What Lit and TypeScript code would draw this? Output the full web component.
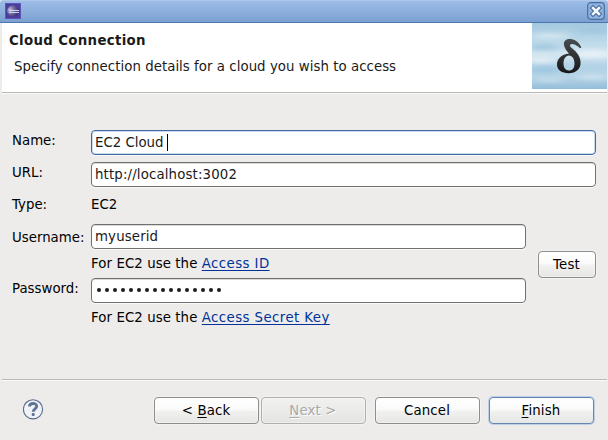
import { LitElement, html, css, svg } from "lit";
import { customElement, property } from "lit/decorators.js";

@customElement("dialog-button")
class DialogButton extends LitElement {
  @property() kind = "";
  @property() mnemonic = "";
  @property() before = "";
  @property() after = "";
  static styles = css`
    :host { display: block; height: 27px; }
    .btn {
      box-sizing: border-box; width: 100%; height: 27px; display: block; padding: 0 1px 0 0;
      border: 1px solid #8e8d8b; border-radius: 4px;
      background: linear-gradient(#fff 0%, #fafafa 48%, #f1f1f0 52%, #e6e6e4 100%);
      box-shadow: 0 0 0 1px rgba(255,255,255,.35), inset 0 0 0 1px rgba(255,255,255,.4);
      font: 13.33px/25px "DejaVu Sans", sans-serif; letter-spacing: .15px; color: #000; text-align: center;
    }
    .disabled { border-color: #b0afad; background: linear-gradient(#f1f1f0, #e4e4e2); color: #aaa9a7; text-shadow: 1px 1px 0 #fff; }
    .primary { border-color: #6487b2; box-shadow: 0 0 0 1px #bdd0e8; }
    .key { text-decoration: underline; text-decoration-thickness: 1px; text-underline-offset: 2px; text-decoration-skip-ink: none; }
  `;
  render() {
    return html`<button class="btn ${this.kind}" ?disabled=${this.kind === "disabled"}>${this.before}<span class="key">${this.mnemonic}</span>${this.after}</button>`;
  }
}

@customElement("app-root")
class AppRoot extends LitElement {
  static styles = css`
    :host {
      display: flex; flex-direction: column; box-sizing: border-box; width: 608px; height: 440px;
      overflow: hidden; background: #edeceb; color: #000;
      font: 13.33px/16px "DejaVu Sans", sans-serif; white-space: pre;
    }
    .titlebar {
      box-sizing: border-box; height: 23px; flex: none; display: flex; align-items: flex-start; justify-content: space-between;
      padding: 0 3px 0 5px; border-bottom: 1px solid #4b76ae; border-top: 1px solid #adc8ea;
      background: linear-gradient(#9dbde7, #7ba0d1);
      border-radius: 3px 3px 0 0;
    }
    .app { width: 16px; height: 16px; margin-top: 2px; }
    .close { width: 18px; height: 18px; margin-top: 1px; }
    .header {
      display: flex; justify-content: space-between; height: 69px; flex: none; margin: 0 1px 0 2px;
      background: #fff; border-bottom: 1px solid #b9b8b5; box-shadow: 0 1px 0 #fafafa;
    }
    .headings { padding: 10px 0 0 7px; color: #1a1a1a; }
    .title { font-weight: bold; letter-spacing: .33px; }
    .desc { padding: 10px 0 0 5px; letter-spacing: .04px; }
    .banner { width: 75px; height: 66px; }
    .form {
      display: grid; margin: 37px 12px 0; flex: none;
      grid-template-columns: 79px 435px 12px 58px;
      grid-template-rows: 25px 7px 25px 37px 25px 29px 25px 29px;
      align-items: center;
    }
    .label { grid-column: 1; padding-bottom: 4px; }
    .field {
      grid-column: 2; box-sizing: border-box; height: 25px; padding: 0 3px; border: 1px solid #71706e; border-radius: 4px;
      background: #fff; color: #1a1a1a; line-height: 23px; display: flex; align-items: center; letter-spacing: .14px;
      box-shadow: 0 1px 0 #f9f9f8, inset 0 1px 0 #d9d9d8;
    }
    .wide { grid-column: 2 / 5; }
    .focused { border-color: #3f6ba3; box-shadow: 0 1px 0 #f9f9f8, inset 0 0 0 1px #cbdcf0; letter-spacing: 0; }
    .caret { width: 1px; height: 17px; margin-left: -1px; background: #000; }
    .dots { display: flex; gap: 3.6px; padding-left: 1.8px; margin-top: -1px; }
    .dot { width: 4.4px; height: 4.4px; border-radius: 50%; background: #1a1a1a; }
    .value, .hint { grid-column: 2; }
    .hint { letter-spacing: .08px; }
    .value { padding-bottom: 2px; }
    .r1 { grid-row: 1; } .r2 { grid-row: 3; } .r3 { grid-row: 4; } .r4 { grid-row: 5; }
    .r5 { grid-row: 6; } .r6 { grid-row: 7; } .r7 { grid-row: 8; }
    .label.r3 { padding-bottom: 2px; }
    .label.r4 { padding: 2px 0 0; }
    .link { color: #003399; letter-spacing: .42px; text-decoration: underline; text-decoration-thickness: 1px; text-underline-offset: 2px; text-decoration-skip-ink: none; }
    .test { grid-column: 4; grid-row: 5 / 8; padding-top: 2px; }
    .footer {
      margin: auto 1px 0 2px; height: 60px; flex: none; display: flex; align-items: flex-start; padding: 0 11px 0 21px;
      border-top: 1px solid #b9b8b5; box-shadow: inset 0 1px 0 #fafafa;
    }
    .help { width: 21px; height: 21px; margin: 19px 110px 0 0; }
    .action { width: 105px; margin: 17px 2px 0 0; }
    .apart { margin-left: 7px; }
    .last { margin: 17px 0 0 7px; }
  `;

  private deltaLogo() {
    return svg`
      <defs>
        <linearGradient id="sky" x1="0" y1="0" x2="0" y2="1">
          <stop offset="0" stop-color="#a4c9df"/><stop offset=".25" stop-color="#b9d7e8"/>
          <stop offset=".48" stop-color="#d3e6f1"/><stop offset=".65" stop-color="#b3d2e6"/>
          <stop offset=".82" stop-color="#b6d4e6"/><stop offset="1" stop-color="#93bedb"/>
        </linearGradient>
        <linearGradient id="ink" x1="0" y1="0" x2="0" y2="1">
          <stop offset="0" stop-color="#4a4d50"/><stop offset="1" stop-color="#161718"/>
        </linearGradient>
        <filter id="soft" x="-50%" y="-200%" width="200%" height="500%" color-interpolation-filters="sRGB"><feGaussianBlur stdDeviation="6 2"/></filter>
      </defs>
      <rect width="75" height="66" fill="url(#sky)"/>
      <g filter="url(#soft)">
        <ellipse cx="18" cy="13" rx="20" ry="3" fill="#d3e6f0"/>
        <ellipse cx="62" cy="7" rx="18" ry="3" fill="#9fc6df"/>
        <ellipse cx="12" cy="24" rx="17" ry="3" fill="#9fc7df"/>
        <ellipse cx="59" cy="31" rx="20" ry="4" fill="#e6f0f6"/>
        <ellipse cx="9" cy="37" rx="17" ry="3" fill="#e2eef5"/>
        <ellipse cx="13" cy="47" rx="15" ry="2.5" fill="#97c2de"/>
        <ellipse cx="61" cy="54" rx="15" ry="2.5" fill="#cfe3ef"/>
        <ellipse cx="17" cy="57" rx="15" ry="2" fill="#c7deec"/>
      </g>
      <path fill="url(#ink)" fill-rule="evenodd" d="M49.300 24.500C47 18.500 42 16 37.500 16C33.500 16 31.500 18.500 32 22C32.500 25 34.500 28 37 30.500C29.500 31.500 25 35.500 25 41.500C25 47 30 50.200 36.500 50.200C44 50.200 48.600 46 48.600 40C48.600 34 45.500 30 41.500 26.500C39.500 24.700 37.500 23.500 38 22C39.500 20 43 21 46.500 23.800C47.500 25 48.500 25.500 49.300 24.500ZM37 32.500C40.500 33 42.500 36 42.500 40.500C42.500 45 40.500 47.500 37 47.500C33.300 47.500 31.500 44.500 31.500 40.500C31.500 36 33.500 33 37 32.500Z"/>`;
  }

  render() {
    return html`
      <div class="titlebar">
        <svg class="app" viewBox="0 0 16 16">
          <defs><radialGradient id="orb" cx=".25" cy=".4" r=".8"><stop offset="0" stop-color="#c5bedd"/><stop offset=".45" stop-color="#74699d"/><stop offset="1" stop-color="#352768"/></radialGradient></defs>
          <rect width="16" height="16" fill="#493fa0"/>
          <rect x=".5" y=".5" width="15" height="15" fill="none" stroke="#6152b8"/>
          <circle cx="8" cy="8" r="5.800" fill="url(#orb)"/>
          <path d="M4 7.500H14M4 9.500H14" stroke="#c9d9ef" stroke-width="1"/>
        </svg>
        <svg class="close" viewBox="0 0 18 18">
          <rect x=".7" y=".7" width="16.600" height="16.600" rx="3" fill="#8fb2df" stroke="#476f9f" stroke-width="1.200"/>
          <path d="M6 6L12 12M12 6L6 12" stroke="#456c9f" stroke-width="4.600" stroke-linecap="square"/>
          <path d="M6 6L12 12M12 6L6 12" stroke="#f4f8fd" stroke-width="2.500" stroke-linecap="square"/>
        </svg>
      </div>
      <div class="header">
        <div class="headings"><div class="title">Cloud Connection</div><div class="desc">Specify connection details for a cloud you wish to access</div></div>
        <svg class="banner" viewBox="0 0 75 66">${this.deltaLogo()}</svg>
      </div>
      <div class="form">
        <div class="label r1">Name:</div><div class="field wide focused r1">EC2 Cloud <span class="caret"></span></div>
        <div class="label r2">URL:</div><div class="field wide r2">http://localhost:3002</div>
        <div class="label r3">Type:</div><div class="value r3">EC2</div>
        <div class="label r4">Username:</div><div class="field r4">myuserid</div>
        <div class="hint r5">For EC2 use the <a class="link">Access ID</a></div>
        <div class="label r6">Password:</div>
        <div class="field r6"><span class="dots">${Array.from({ length: 16 }, () => html`<i class="dot"></i>`)}</span></div>
        <div class="hint r7">For EC2 use the <a class="link">Access Secret Key</a></div>
        <dialog-button class="test" before="Test"></dialog-button>
      </div>
      <div class="footer">
        <svg class="help" viewBox="0 0 21 21">
          <circle cx="10" cy="10.300" r="9.600" fill="#f1f2f5" stroke="#566d90" stroke-width="1.100"/>
          <path d="M6.500 7.500C6.500 3.500 13.700 3.500 13.700 7.200C13.700 10 10.300 9.800 10.200 12.800" fill="none" stroke="#5f7598" stroke-width="2.900"/>
          <rect x="8.700" y="14" width="3" height="3" rx="1" fill="#5f7598"/>
        </svg>
        <dialog-button class="action" before="&lt; " mnemonic="B" after="ack"></dialog-button>
        <dialog-button class="action" kind="disabled" mnemonic="N" after="ext &gt;"></dialog-button>
        <dialog-button class="action apart" before="Cancel"></dialog-button>
        <dialog-button class="action last" kind="primary" mnemonic="F" after="inish"></dialog-button>
      </div>`;
  }
}
